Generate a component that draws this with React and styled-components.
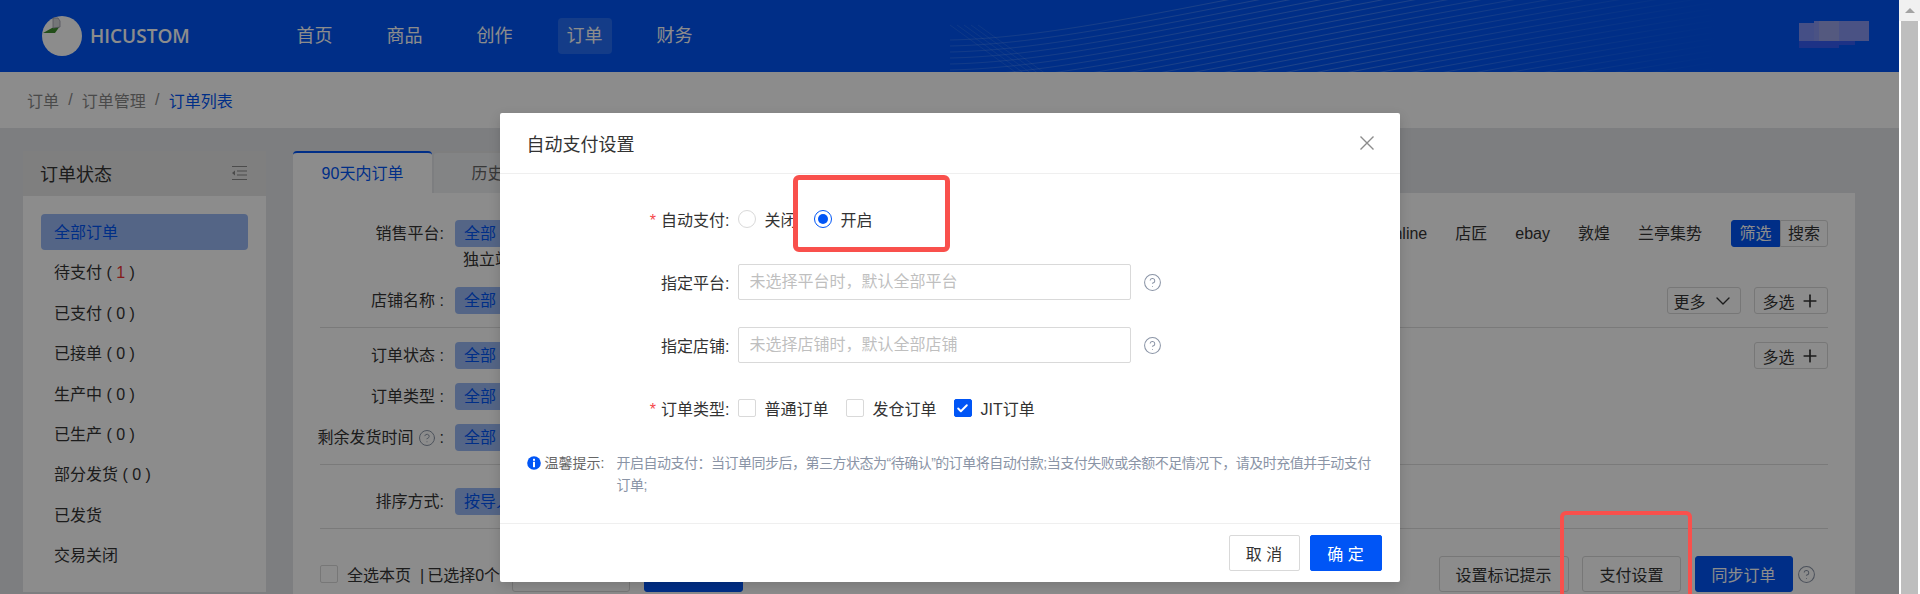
import React from 'react';
import styled, { createGlobalStyle } from 'styled-components';
import { CircleHelp, ChevronDown, Plus, Check } from 'lucide-react';

const GlobalStyle = createGlobalStyle`
  html, body {
    margin: 0;
    padding: 0;
    height: 594px;
    overflow: hidden;
  }
  body {
    font-family: "Liberation Sans", "Noto Sans CJK SC", sans-serif;
    font-size: 16px;
    color: #333;
  }
  * {
    box-sizing: border-box;
  }
`;

const PRIMARY = '#0055f6';

const Shell = styled.div`
  display: flex;
  width: 1920px;
  height: 594px;
  overflow: hidden;
  position: relative;
`;

const Page = styled.div`
  position: relative;
  width: 1899px;
  height: 594px;
  overflow: hidden;
  background: #e3e5ea;
`;

const ScrollTrack = styled.div`
  width: 21px;
  background: #fff;
  display: flex;
  flex-direction: column;
`;

const ScrollButton = styled.div`
  height: 21px;
  background: #f1f1f1;
  display: flex;
  align-items: center;
  justify-content: center;
  &::after {
    content: '';
    border-left: 5px solid transparent;
    border-right: 5px solid transparent;
    border-bottom: 5px solid #a3a3a3;
  }
`;

const ScrollThumb = styled.div`
  flex: 1;
  margin: 0 2px;
  background: #bebebe;
`;

const Header = styled.header`
  position: relative;
  height: 72px;
  background: ${PRIMARY};
  display: flex;
  align-items: center;
  padding-left: 42px;
  overflow: hidden;
`;

const HeaderWaves = styled.svg`
  position: absolute;
  inset: 0;
  width: 100%;
  height: 100%;
  pointer-events: none;
`;

const Brand = styled.div`
  display: flex;
  align-items: center;
  gap: 8px;
  width: 149px;
  color: #fff;
  font-family: "Open Sans", sans-serif;
  font-weight: 600;
  font-size: 19px;
  line-height: 40px;
`;

const Nav = styled.nav`
  position: relative;
  display: flex;
  gap: 36px;
  margin-left: 96.5px;
`;

const NavItem = styled.a`
  width: 54px;
  height: 36px;
  border-radius: 4px;
  color: #fff;
  font-size: 18px;
  line-height: 37px;
  text-align: center;
  background: ${(p) => (p.$active ? 'rgba(255, 255, 255, 0.15)' : 'transparent')};
`;

const UserName = styled.svg`
  position: relative;
  margin-left: auto;
  margin-right: 30px;
  margin-bottom: 4px;
`;

const Breadcrumb = styled.div`
  height: 56px;
  background: #fff;
  display: flex;
  align-items: center;
  padding-left: 27px;
  gap: 9.2px;
  font-size: 16px;
  color: #888;
`;

const Crumb = styled.span`
  color: ${(p) => (p.$current ? PRIMARY : '#888')};
`;

const Content = styled.div`
  display: flex;
  gap: 27px;
  padding: 23px 44px 0 23px;
`;

const Sidebar = styled.aside`
  width: 243px;
  height: 441px;
  flex: none;
  background: #fff;
`;

const SidebarHead = styled.div`
  height: 45px;
  background: #e7e7e7;
  padding: 0 19px 2px 17px;
  display: flex;
  align-items: center;
  justify-content: space-between;
  font-size: 18px;
  color: #333;
`;

const StatusList = styled.ul`
  list-style: none;
  margin: 0;
  padding: 18px 18px 0;
  display: flex;
  flex-direction: column;
  gap: 4.4px;
`;

const StatusItem = styled.li`
  height: 36px;
  line-height: 38px;
  padding-left: 13px;
  border-radius: 4px;
  font-size: 16px;
  color: ${(p) => (p.$active ? PRIMARY : '#333')};
  background: ${(p) => (p.$active ? '#99b8f5' : 'transparent')};
`;

const Red = styled.span`
  color: #e33;
`;

const Main = styled.main`
  flex: 1;
  min-width: 0;
`;

const Tabs = styled.div`
  display: flex;
  gap: 2px;
  height: 42px;
`;

const Tab = styled.div`
  width: 139px;
  height: 42px;
  line-height: 42px;
  text-align: center;
  font-size: 16px;
  color: ${(p) => (p.$active ? PRIMARY : '#666')};
  background: ${(p) => (p.$active ? '#fff' : '#eef0f3')};
  border-top: 2px solid ${(p) => (p.$active ? PRIMARY : '#e6e6e6')};
  border-radius: 4px 4px 0 0;
`;

const Card = styled.div`
  background: #fff;
  padding: 27px 27px 0;
  height: 420px;
`;

const Section = styled.section`
  display: flex;
  flex-direction: column;
  gap: 14px;
  padding-top: ${(p) => p.$top ?? 14}px;
  padding-bottom: 13px;
  border-bottom: 1px solid #dedede;
`;

const FirstSection = styled(Section)`
  padding-top: 0;
`;

const Row = styled.div`
  display: flex;
  align-items: flex-start;
  min-height: 27px;
`;

const RowLabel = styled.div`
  width: 124px;
  flex: none;
  margin-right: 11px;
  height: 27px;
  line-height: 27px;
  text-align: right;
  font-size: 16px;
  color: #333;
  white-space: nowrap;
  display: flex;
  justify-content: flex-end;
  align-items: center;
  gap: 4px;
`;

const Options = styled.div`
  flex: 1;
  display: flex;
  flex-wrap: wrap;
  align-items: center;
  min-height: 27px;
`;

const Tag = styled.span`
  height: 27px;
  line-height: 27px;
  padding: 0 9px;
  border-radius: 4px;
  font-size: 16px;
  color: ${PRIMARY};
  background: #99b8f5;
`;

const PlatformLine = styled.div`
  width: 100%;
  display: flex;
  align-items: center;
  height: 27px;
`;

const Platforms = styled.div`
  margin-left: auto;
  display: flex;
  gap: 28px;
  font-size: 16px;
  line-height: 27px;
  color: #333;
`;

const Platform = styled.span`
  display: block;
  height: 27px;
`;

const SecondLine = styled.div`
  width: 100%;
  height: 26px;
  line-height: 26px;
  padding-left: 8px;
  color: #333;
`;

const Toggle = styled.div`
  display: flex;
  flex: none;
  margin-left: 29px;
  height: 27px;
`;

const ToggleItem = styled.span`
  width: ${(p) => (p.$on ? 49 : 48)}px;
  height: 27px;
  line-height: 25px;
  text-align: center;
  font-size: 16px;
  color: ${(p) => (p.$on ? '#fff' : '#333')};
  background: ${(p) => (p.$on ? PRIMARY : '#fff')};
  border: 1px solid ${(p) => (p.$on ? PRIMARY : '#d9d9d9')};
  border-radius: ${(p) => (p.$on ? '3px 0 0 3px' : '0 3px 3px 0')};
`;

const SideButtons = styled.div`
  display: flex;
  gap: 13px;
  flex: none;
`;

const MiniButton = styled.span`
  width: 74px;
  height: 27px;
  border: 1px solid #d9d9d9;
  border-radius: 3px;
  display: flex;
  align-items: center;
  justify-content: center;
  gap: 5px;
  font-size: 16px;
  color: #333;
`;

const ActionBar = styled.div`
  display: flex;
  align-items: center;
  height: 36px;
  margin-top: 27px;
  font-size: 16px;
  color: #333;
`;

const SelectAll = styled.span`
  margin-left: 9px;
  width: 165px;
  white-space: nowrap;
`;

const Separator = styled.span`
  margin: 0 3px 0 9px;
`;

const BarSelect = styled.span`
  width: 118px;
  height: 36px;
  border: 1px solid #d9d9d9;
  border-radius: 3px;
  background: #fff;
  margin-right: 14px;
`;

const ActionButtons = styled.div`
  margin-left: auto;
  display: flex;
  align-items: center;
  gap: 13.5px;
  margin-right: 12px;
`;

const ActionButton = styled.button`
  width: ${(p) => p.$w}px;
  height: 36px;
  padding: 0;
  font: inherit;
  font-size: 16px;
  border-radius: 3px;
  color: ${(p) => (p.$primary ? '#fff' : '#333')};
  background: ${(p) => (p.$primary ? PRIMARY : '#fff')};
  border: 1px solid ${(p) => (p.$primary ? PRIMARY : '#d9d9d9')};
`;

const Overlay = styled.div`
  position: absolute;
  inset: 0;
  background: rgba(0, 0, 0, 0.45);
  display: flex;
  justify-content: center;
  align-items: flex-start;
  padding-top: 113px;
`;

const Dialog = styled.div`
  width: 900px;
  background: #fff;
  border-radius: 2px;
  box-shadow: 0 4px 12px rgba(0, 0, 0, 0.15);
`;

const DialogHead = styled.div`
  height: 61px;
  padding: 0 25px 1px 27px;
  border-bottom: 1px solid #efefef;
  display: flex;
  align-items: center;
  justify-content: space-between;
  font-size: 18px;
  color: #333;
`;

const DialogBody = styled.div`
  padding: 27px 25px 27px 27px;
`;

const Form = styled.div`
  display: flex;
  flex-direction: column;
  gap: 27px;
`;

const FormRow = styled.div`
  display: flex;
  align-items: center;
  height: 36px;
`;

const FormLabel = styled.label`
  width: 203px;
  margin-right: 8px;
  flex: none;
  text-align: right;
  font-size: 16px;
  color: #333;
  &::before {
    content: ${(p) => (p.$required ? "'*'" : 'none')};
    color: #f5484a;
    margin-right: 5px;
  }
`;

const Choice = styled.span`
  display: flex;
  align-items: center;
  gap: 9px;
  margin-right: 17px;
  font-size: 16px;
  color: #333;
  white-space: nowrap;
`;

const RadioMark = styled.span`
  width: 18px;
  height: 18px;
  border-radius: 50%;
  border: 1px solid ${(p) => (p.$on ? PRIMARY : '#d9d9d9')};
  display: flex;
  align-items: center;
  justify-content: center;
  &::after {
    content: '';
    width: 10px;
    height: 10px;
    border-radius: 50%;
    background: ${(p) => (p.$on ? PRIMARY : 'transparent')};
  }
`;

const CheckMark = styled.span`
  width: 18px;
  height: 18px;
  border-radius: 2px;
  border: 1px solid ${(p) => (p.$on ? PRIMARY : '#d9d9d9')};
  background: ${(p) => (p.$on ? PRIMARY : '#fff')};
  display: flex;
  align-items: center;
  justify-content: center;
  color: #fff;
`;

const TextInput = styled.input`
  width: 393px;
  height: 36px;
  padding: 0 11px;
  border: 1px solid #d9d9d9;
  border-radius: 2px;
  font: inherit;
  font-size: 16px;
  &::placeholder {
    color: #bfbfbf;
  }
`;

const HelpIcon = styled(CircleHelp)`
  flex: none;
  margin-left: ${(p) => p.$gap ?? 12}px;
  color: #8a94a6;
`;

const Tip = styled.div`
  display: flex;
  align-items: flex-start;
  margin-top: 26px;
  font-size: 14px;
  line-height: 22px;
`;

const TipIcon = styled.svg`
  flex: none;
  margin: 4px 4px 0 0;
`;

const TipTitle = styled.span`
  flex: none;
  width: 72px;
  color: #666;
`;

const TipText = styled.span`
  color: #8a94a6;
  letter-spacing: -0.5px;
`;

const DialogFoot = styled.div`
  height: 59px;
  padding: 11px 18px;
  border-top: 1px solid #efefef;
  display: flex;
  justify-content: flex-end;
  gap: 10px;
`;

const FootButton = styled.button`
  width: ${(p) => (p.$primary ? 72 : 71)}px;
  height: 36px;
  padding: 0;
  font: inherit;
  font-size: 16px;
  border-radius: 2px;
  color: ${(p) => (p.$primary ? '#fff' : '#333')};
  background: ${(p) => (p.$primary ? PRIMARY : '#fff')};
  border: 1px solid ${(p) => (p.$primary ? PRIMARY : '#d9d9d9')};
`;

// screenshot annotations, drawn on top of the whole page
const Callout = styled.div`
  position: absolute;
  left: ${(p) => p.$x}px;
  top: ${(p) => p.$y}px;
  width: ${(p) => p.$w}px;
  height: ${(p) => p.$h}px;
  border: ${(p) => p.$b}px solid #f9504c;
  border-radius: 6px;
`;

const statuses = [
  ['全部订单'],
  ['待支付', 1],
  ['已支付', 0],
  ['已接单', 0],
  ['生产中', 0],
  ['已生产', 0],
  ['部分发货', 0],
  ['已发货'],
  ['交易关闭'],
];

function Waves() {
  return (
    <HeaderWaves viewBox="0 0 1899 72" preserveAspectRatio="none">
      <defs>
        <linearGradient id="fade" gradientUnits="userSpaceOnUse" x1="980" y1="0" x2="1720" y2="0">
          <stop offset="0" stopColor="#fff" stopOpacity="0.14" />
          <stop offset="0.5" stopColor="#fff" stopOpacity="0.24" />
          <stop offset="1" stopColor="#fff" stopOpacity="0" />
        </linearGradient>
      </defs>
      {Array.from({ length: 32 }, (_, i) => {
        const y = 37 + i * 6;
        return (
          <path
            key={i}
            d={`M950 ${y + 3} C1100 ${y} 1300 ${y - 62} 1750 ${y - 130}`}
            fill="none"
            stroke="url(#fade)"
            strokeWidth="1"
          />
        );
      })}
      {[0, 1, 2, 3, 4].map((i) => (
        <path key={i} d={`M${950 + i * 7} 25 L${1018 + i * 7} 74`} stroke="#fff" strokeOpacity="0.1" fill="none" />
      ))}
    </HeaderWaves>
  );
}

function Logo() {
  return (
    <svg width="40" height="40" viewBox="0 0 40 40">
      <circle cx="20" cy="20" r="20" fill="#fff" />
      <path d="M1 17 L10 12 L18 10 L13 17 Z" fill="#3f8f2f" />
      <path d="M11 2 L16 2 L18 5 L18 11 L11 12 Z" fill="#d5d8da" stroke="#99a" strokeWidth="0.8" />
    </svg>
  );
}

function OutdentIcon() {
  return (
    <svg width="16" height="16" viewBox="0 0 16 16" fill="none" stroke="#8a8a8a" strokeWidth="1.2">
      <path d="M1 1.5 H16 M6 6 H16 M6 10 H16 M1 14.5 H16" />
      <path d="M4 5.5 L1 8 L4 10.5 Z" fill="#8a8a8a" stroke="none" />
    </svg>
  );
}

function CloseIcon() {
  return (
    <svg width="16" height="16" viewBox="0 0 16 16" fill="none" stroke="#8c8c8c" strokeWidth="1.4">
      <path d="M1.5 1.5 L14.5 14.5 M14.5 1.5 L1.5 14.5" />
    </svg>
  );
}

export default function App() {
  return (
    <>
      <GlobalStyle />
      <Shell>
        <Page>
          <Header>
            <Waves />
            <Brand>
              <Logo />
              HICUSTOM
            </Brand>
            <Nav>
              <NavItem>首页</NavItem>
              <NavItem>商品</NavItem>
              <NavItem>创作</NavItem>
              <NavItem $active>订单</NavItem>
              <NavItem>财务</NavItem>
            </Nav>
            <UserName width="70" height="28" viewBox="0 0 70 28">
              <rect x="0" y="3" width="70" height="18" fill="#7f91f5" />
              <rect x="15" y="1" width="56" height="20" fill="#8796f0" />
              <rect x="20" y="1" width="20" height="20" fill="#9aa3e8" />
              <rect x="0" y="21" width="40" height="7" fill="#365bf5" />
              <rect x="40" y="21" width="16" height="4" fill="#365bf5" />
            </UserName>
          </Header>
          <Breadcrumb>
            <Crumb>订单</Crumb>/<Crumb>订单管理</Crumb>/<Crumb $current>订单列表</Crumb>
          </Breadcrumb>
          <Content>
            <Sidebar>
              <SidebarHead>
                订单状态
                <OutdentIcon />
              </SidebarHead>
              <StatusList>
                {statuses.map(([name, count], i) => (
                  <StatusItem key={name} $active={i === 0}>
                    {name}
                    {count !== undefined && (
                      <>
                        {' ( '}
                        {count > 0 ? <Red>{count}</Red> : count}
                        {' )'}
                      </>
                    )}
                  </StatusItem>
                ))}
              </StatusList>
            </Sidebar>
            <Main>
              <Tabs>
                <Tab $active>90天内订单</Tab>
                <Tab>历史订单</Tab>
              </Tabs>
              <Card>
                <FirstSection>
                  <Row>
                    <RowLabel>销售平台:</RowLabel>
                    <Options>
                      <PlatformLine>
                        <Tag>全部</Tag>
                        <Platforms>
                          <Platform>online</Platform>
                          <Platform>店匠</Platform>
                          <Platform>ebay</Platform>
                          <Platform>敦煌</Platform>
                          <Platform>兰亭集势</Platform>
                        </Platforms>
                        <Toggle>
                          <ToggleItem $on>筛选</ToggleItem>
                          <ToggleItem>搜索</ToggleItem>
                        </Toggle>
                      </PlatformLine>
                      <SecondLine>独立站</SecondLine>
                    </Options>
                  </Row>
                  <Row>
                    <RowLabel>店铺名称 :</RowLabel>
                    <Options>
                      <Tag>全部</Tag>
                    </Options>
                    <SideButtons>
                      <MiniButton>
                        更多 <ChevronDown size={24} strokeWidth={1.4} />
                      </MiniButton>
                      <MiniButton>
                        多选 <Plus size={20} strokeWidth={2} />
                      </MiniButton>
                    </SideButtons>
                  </Row>
                </FirstSection>
                <Section>
                  <Row>
                    <RowLabel>订单状态 :</RowLabel>
                    <Options>
                      <Tag>全部</Tag>
                    </Options>
                    <SideButtons>
                      <MiniButton>
                        多选 <Plus size={20} strokeWidth={2} />
                      </MiniButton>
                    </SideButtons>
                  </Row>
                  <Row>
                    <RowLabel>订单类型 :</RowLabel>
                    <Options>
                      <Tag>全部</Tag>
                    </Options>
                  </Row>
                  <Row>
                    <RowLabel>
                      <span>剩余发货时间</span>
                      <HelpIcon size={18} strokeWidth={1.3} $gap={0} />
                      <span>:</span>
                    </RowLabel>
                    <Options>
                      <Tag>全部</Tag>
                    </Options>
                  </Row>
                </Section>
                <Section $top={23}>
                  <Row>
                    <RowLabel>排序方式:</RowLabel>
                    <Options>
                      <Tag>按导入</Tag>
                    </Options>
                  </Row>
                </Section>
                <ActionBar>
                  <CheckMark />
                  <SelectAll>
                    全选本页<Separator>|</Separator>已选择0个
                  </SelectAll>
                  <BarSelect />
                  <ActionButton $primary $w={99} />
                  <ActionButtons>
                    <ActionButton $w={130}>设置标记提示</ActionButton>
                    <ActionButton $w={99}>支付设置</ActionButton>
                    <ActionButton $primary $w={98}>同步订单</ActionButton>
                    <HelpIcon size={19} strokeWidth={1.3} $gap={-9} />
                  </ActionButtons>
                </ActionBar>
              </Card>
            </Main>
          </Content>
          <Overlay>
            <Dialog>
              <DialogHead>
                自动支付设置
                <CloseIcon />
              </DialogHead>
              <DialogBody>
                <Form>
                  <FormRow>
                    <FormLabel $required>自动支付:</FormLabel>
                    <Choice>
                      <RadioMark />
                      关闭
                    </Choice>
                    <Choice>
                      <RadioMark $on />
                      开启
                    </Choice>
                  </FormRow>
                  <FormRow>
                    <FormLabel>指定平台:</FormLabel>
                    <TextInput placeholder="未选择平台时，默认全部平台" />
                    <HelpIcon size={19} strokeWidth={1.3} />
                  </FormRow>
                  <FormRow>
                    <FormLabel>指定店铺:</FormLabel>
                    <TextInput placeholder="未选择店铺时，默认全部店铺" />
                    <HelpIcon size={19} strokeWidth={1.3} />
                  </FormRow>
                  <FormRow>
                    <FormLabel $required>订单类型:</FormLabel>
                    <Choice>
                      <CheckMark />
                      普通订单
                    </Choice>
                    <Choice>
                      <CheckMark />
                      发仓订单
                    </Choice>
                    <Choice>
                      <CheckMark $on>
                        <Check size={13} strokeWidth={3.5} />
                      </CheckMark>
                      JIT订单
                    </Choice>
                  </FormRow>
                </Form>
                <Tip>
                  <TipIcon width="14" height="14" viewBox="0 0 14 14">
                    <circle cx="7" cy="7" r="6.8" fill={PRIMARY} />
                    <rect x="6" y="2.8" width="2" height="2" fill="#fff" />
                    <rect x="6" y="5.8" width="2" height="5.4" fill="#fff" />
                  </TipIcon>
                  <TipTitle>温馨提示:</TipTitle>
                  <TipText>
                    开启自动支付：当订单同步后，第三方状态为“待确认”的订单将自动付款;当支付失败或余额不足情况下，请及时充值并手动支付订单;
                  </TipText>
                </Tip>
              </DialogBody>
              <DialogFoot>
                <FootButton>取 消</FootButton>
                <FootButton $primary>确 定</FootButton>
              </DialogFoot>
            </Dialog>
          </Overlay>
          <Callout $x={793} $y={175} $w={157} $h={77} $b={5} />
          <Callout $x={1560} $y={511} $w={132} $h={120} $b={4} />
        </Page>
        <ScrollTrack>
          <ScrollButton />
          <ScrollThumb />
        </ScrollTrack>
      </Shell>
    </>
  );
}
